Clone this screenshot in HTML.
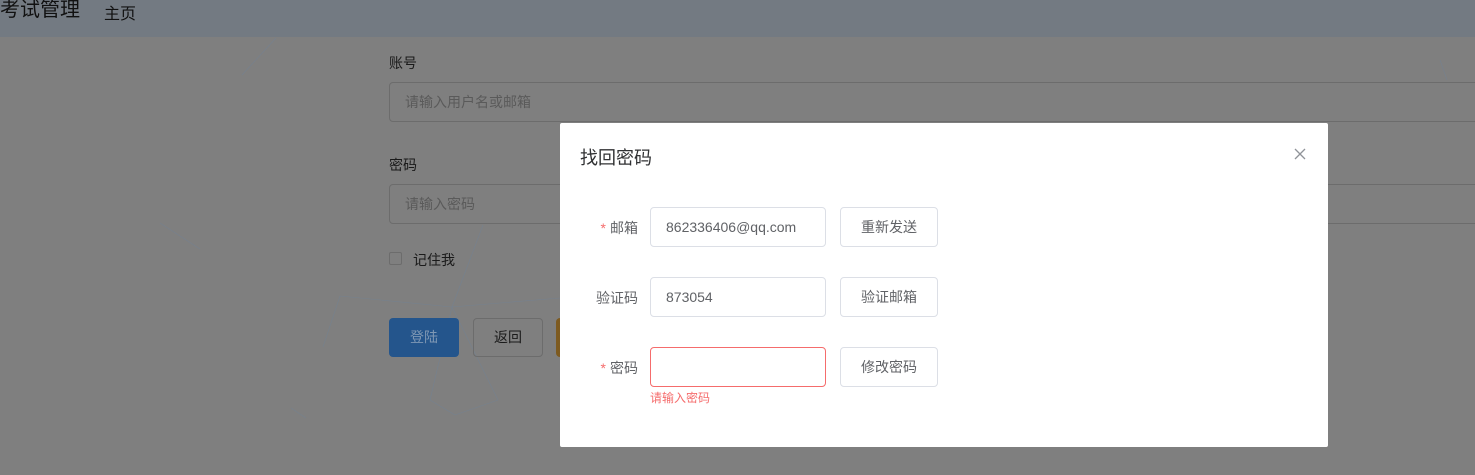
<!DOCTYPE html>
<html><head><meta charset="utf-8"><style>
*{box-sizing:border-box;margin:0;padding:0}
body{width:1475px;height:475px;overflow:hidden;background:#7f7f7f;font-family:"Liberation Sans","Noto Sans CJK SC",sans-serif;position:relative}
.hdr{position:absolute;left:0;top:0;width:1475px;height:37px;background:#737a82}
.hdr .t{position:absolute;left:0;top:-2px;font-size:20px;color:#111;line-height:24px}
.hdr .h{position:absolute;left:104px;top:0px;font-size:16px;color:#111}
.lbl{position:absolute;left:389px;font-size:14px;color:#1a1a1a}
.bin{position:absolute;left:389px;width:1100px;height:40px;border:1px solid #6c6c6c;border-radius:4px;font-size:14px;color:#5a5a5a;padding-left:15px;line-height:38px}
.dlg{position:absolute;left:560px;top:123px;width:768px;height:324px;background:#fff;border-radius:2px}
.dlg .ti{position:absolute;left:20px;top:21px;font-size:18px;color:#303133}
.x{position:absolute;left:734px;top:25px}
.fl{position:absolute;width:78px;text-align:right;font-size:14px;color:#606266}
.fl b{color:#f56c6c;font-weight:normal;margin-right:4px}
.in{position:absolute;left:90px;width:176px;height:40px;border:1px solid #dcdfe6;border-radius:4px;font-size:14px;color:#606266;padding-left:15px;line-height:38px}
.bt{position:absolute;left:280px;width:98px;height:40px;border:1px solid #dcdfe6;border-radius:4px;font-size:14px;color:#606266;text-align:center;line-height:38px}
</style></head><body>
<div class="hdr"><div class="t">考试管理</div><div class="h">主页</div></div>
<svg style="position:absolute;left:0;top:0" width="1475" height="475">
<g stroke="#6f8299" stroke-width=".6" fill="none" opacity=".6">
<line x1="242" y1="75" x2="276" y2="38"/><line x1="160" y1="223" x2="200" y2="249"/>
<line x1="452" y1="307" x2="483" y2="225"/><line x1="452" y1="307" x2="340" y2="296"/>
<line x1="340" y1="296" x2="323" y2="347"/><line x1="452" y1="307" x2="430" y2="400"/>
<line x1="452" y1="307" x2="498" y2="400"/><line x1="430" y1="400" x2="455" y2="415"/>
<line x1="455" y1="415" x2="498" y2="400"/><line x1="452" y1="307" x2="560" y2="298"/>
<line x1="291" y1="408" x2="306" y2="418"/><line x1="1440" y1="60" x2="1447" y2="80"/>
</g></svg>
<div class="lbl" style="top:53px">账号</div>
<div class="bin" style="top:82px">请输入用户名或邮箱</div>
<div class="lbl" style="top:155px">密码</div>
<div class="bin" style="top:184px">请输入密码</div>
<div style="position:absolute;left:389px;top:252px;width:13px;height:13px;border:1px solid #6c6c6c;border-radius:2px"></div>
<div class="lbl" style="left:413px;top:250px">记住我</div>
<div style="position:absolute;left:389px;top:318px;width:70px;height:39px;background:#24558c;border-radius:4px;color:#7f98b4;font-size:14px;text-align:center;line-height:39px">登陆</div>
<div style="position:absolute;left:473px;top:318px;width:70px;height:39px;border:1px solid #6c6c6c;border-radius:4px;color:#1a1a1a;font-size:14px;text-align:center;line-height:37px">返回</div>
<div style="position:absolute;left:556px;top:318px;width:10px;height:39px;background:#7d5a20;border-radius:4px 0 0 4px"></div>
<div class="dlg">
<div class="ti">找回密码</div>
<svg class="x" width="12" height="12"><path d="M1 1L11 11M11 1L1 11" stroke="#909399" stroke-width="1.3"/></svg>
<div class="fl" style="top:95px"><b>*</b>邮箱</div>
<div class="in" style="top:84px">862336406@qq.com</div>
<div class="bt" style="top:84px">重新发送</div>
<div class="fl" style="top:165px">验证码</div>
<div class="in" style="top:154px">873054</div>
<div class="bt" style="top:154px">验证邮箱</div>
<div class="fl" style="top:235px"><b>*</b>密码</div>
<div class="in" style="top:224px;border-color:#f56c6c"></div>
<div class="bt" style="top:224px">修改密码</div>
<div style="position:absolute;left:90px;top:266px;font-size:12px;color:#f56c6c">请输入密码</div>
</div>
</body></html>
